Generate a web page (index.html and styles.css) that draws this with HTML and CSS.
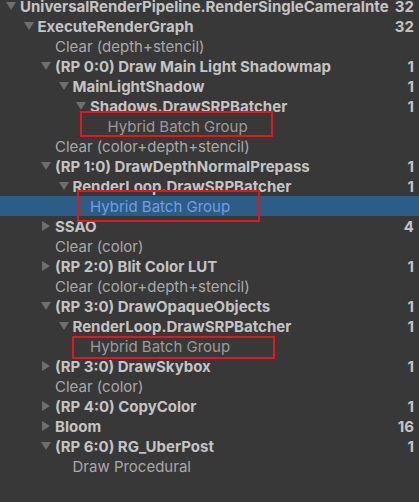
FILE: index.html
```html
<!DOCTYPE html>
<html>
<head>
<meta charset="utf-8">
<link rel="stylesheet" href="styles.css">
</head>
<body>
<div class="tree">
  <div class="row l0"><span class="arrow down"></span><span class="name b">UniversalRenderPipeline.RenderSingleCameraInte</span><span class="count">32</span></div>
  <div class="row l1"><span class="arrow down"></span><span class="name b">ExecuteRenderGraph</span><span class="count">32</span></div>
  <div class="row l2"><span class="arrow"></span><span class="name">Clear (depth+stencil)</span></div>
  <div class="row l2"><span class="arrow down"></span><span class="name b">(RP 0:0) Draw Main Light Shadowmap</span><span class="count">1</span></div>
  <div class="row l3"><span class="arrow down"></span><span class="name b">MainLightShadow</span><span class="count">1</span></div>
  <div class="row l4"><span class="arrow down"></span><span class="name b">Shadows.DrawSRPBatcher</span><span class="count">1</span></div>
  <div class="row l5"><span class="arrow"></span><span class="name dim">Hybrid Batch Group</span></div>
  <div class="row l2"><span class="arrow"></span><span class="name">Clear (color+depth+stencil)</span></div>
  <div class="row l2"><span class="arrow down"></span><span class="name b">(RP 1:0) DrawDepthNormalPrepass</span><span class="count">1</span></div>
  <div class="row l3"><span class="arrow down"></span><span class="name b">RenderLoop.DrawSRPBatcher</span><span class="count">1</span></div>
  <div class="row l4 selected"><span class="arrow"></span><span class="name">Hybrid Batch Group</span></div>
  <div class="row l2"><span class="arrow right"></span><span class="name b">SSAO</span><span class="count">4</span></div>
  <div class="row l2"><span class="arrow"></span><span class="name">Clear (color)</span></div>
  <div class="row l2"><span class="arrow right"></span><span class="name b">(RP 2:0) Blit Color LUT</span><span class="count">1</span></div>
  <div class="row l2"><span class="arrow"></span><span class="name">Clear (color+depth+stencil)</span></div>
  <div class="row l2"><span class="arrow down"></span><span class="name b">(RP 3:0) DrawOpaqueObjects</span><span class="count">1</span></div>
  <div class="row l3"><span class="arrow down"></span><span class="name b">RenderLoop.DrawSRPBatcher</span><span class="count">1</span></div>
  <div class="row l4"><span class="arrow"></span><span class="name dim">Hybrid Batch Group</span></div>
  <div class="row l2"><span class="arrow right"></span><span class="name b">(RP 3:0) DrawSkybox</span><span class="count">1</span></div>
  <div class="row l2"><span class="arrow"></span><span class="name">Clear (color)</span></div>
  <div class="row l2"><span class="arrow right"></span><span class="name b">(RP 4:0) CopyColor</span><span class="count">1</span></div>
  <div class="row l2"><span class="arrow right"></span><span class="name b">Bloom</span><span class="count">16</span></div>
  <div class="row l2"><span class="arrow down"></span><span class="name b">(RP 6:0) RG_UberPost</span><span class="count">1</span></div>
  <div class="row l3"><span class="arrow"></span><span class="name">Draw Procedural</span></div>

  <div class="mark mark1"></div>
  <div class="mark mark2"></div>
  <div class="mark mark3"></div>
</div>
</body>
</html>
```

FILE: styles.css
```css
html, body {
  margin: 0;
  padding: 0;
  background: #383838;
  height: 100%;
  overflow: hidden;
}

.tree {
  position: relative;
  margin-top: -4px;
  font-family: Inter, "Noto Sans", sans-serif;
  font-size: 15px;
  color: #a9a9a9;
}

.row {
  display: flex;
  align-items: center;
  height: 20px;
  padding-right: 5px;
  white-space: nowrap;
}

.row.l0 { padding-left: 4px; }
.row.l1 { padding-left: 21.5px; }
.row.l2 { padding-left: 39px; }
.row.l3 { padding-left: 56.5px; }
.row.l4 { padding-left: 74px; }
.row.l5 { padding-left: 91.5px; }

.arrow {
  flex: 0 0 16px;
  height: 20px;
  display: flex;
  align-items: center;
  justify-content: flex-start;
}

.arrow.down::before {
  content: "";
  margin-left: 2px;
  width: 0;
  height: 0;
  border-left: 5px solid transparent;
  border-right: 5px solid transparent;
  border-top: 8px solid #6e6e6e;
}

.arrow.right::before {
  content: "";
  margin-left: 3px;
  width: 0;
  height: 0;
  border-top: 5px solid transparent;
  border-bottom: 5px solid transparent;
  border-left: 8px solid #6e6e6e;
}

.name {
  flex: 1 1 auto;
  min-width: 0;
  overflow: hidden;
}

.name.b {
  font-weight: 700;
  color: #c4c4c4;
}

.name.dim {
  color: #9c9c9c;
}

.count {
  flex: 0 0 auto;
  margin-left: 6px;
  font-weight: 700;
  color: #c4c4c4;
}

.row.selected {
  background: #2c5d87;
}

.row.selected .name {
  color: #6fa0e3;
}

.mark {
  position: absolute;
  border: 2.5px solid #e3161c;
  box-sizing: border-box;
}

.mark1 { left: 80px; top: 115px; width: 193px; height: 26px; }
.mark2 { left: 77px; top: 194px; width: 183px; height: 32px; }
.mark3 { left: 72px; top: 340px; width: 203px; height: 23px; }
```
